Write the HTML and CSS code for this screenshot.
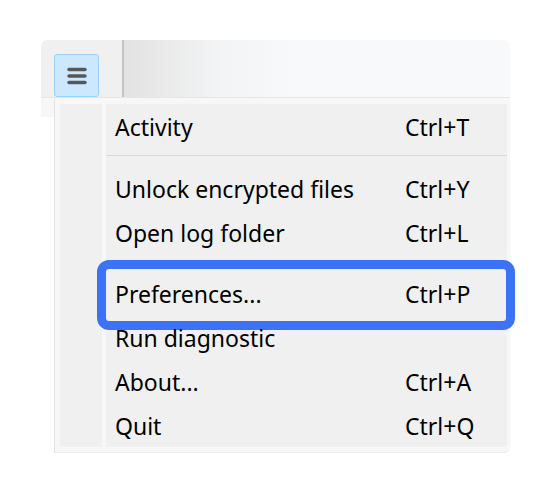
FILE: index.html
```html
<!DOCTYPE html>
<html>
<head>
<meta charset="utf-8">
<link rel="stylesheet" href="styles.css">
</head>
<body>
<div class="window">
  <div class="toolbar">
    <div class="tool-left">
      <div class="menu-btn">
        <svg width="20" height="18" viewBox="0 0 20 18"><g stroke="#575757" stroke-width="3.4" stroke-linecap="round"><line x1="2" y1="2.5" x2="18" y2="2.5"/><line x1="2" y1="9" x2="18" y2="9"/><line x1="2" y1="15.5" x2="18" y2="15.5"/></g></svg>
      </div>
    </div>
    <div class="divider"></div>
    <div class="tool-right"></div>
  </div>
  <div class="body">
    <div class="strip"></div>
    <div class="menu">
      <div class="gutter"></div>
      <div class="items">
        <div class="item"><span class="label">Activity</span><span class="key">Ctrl+T</span></div>
        <div class="sep"></div>
        <div class="item"><span class="label">Unlock encrypted files</span><span class="key">Ctrl+Y</span></div>
        <div class="item"><span class="label">Open log folder</span><span class="key">Ctrl+L</span></div>
        <div class="sep"></div>
        <div class="item highlighted"><span class="label">Preferences...</span><span class="key">Ctrl+P</span><div class="focus-box"></div></div>
        <div class="item"><span class="label">Run diagnostic</span><span class="key"></span></div>
        <div class="item"><span class="label">About...</span><span class="key">Ctrl+A</span></div>
        <div class="item"><span class="label">Quit</span><span class="key">Ctrl+Q</span></div>
      </div>
    </div>
  </div>
</div>
</body>
</html>
```
FILE: styles.css
```css
html, body {
  margin: 0;
  padding: 0;
  background: #ffffff;
}
body {
  font-family: "Noto Sans", "Open Sans", sans-serif;
  color: #000;
}
.window {
  margin: 40px 0 0 41px;
  width: 469px;
  border-radius: 7px 7px 0 0;
}
.toolbar {
  display: flex;
  height: 57px;
  border-bottom: 1px solid #e6e6e6;
  border-radius: 7px 7px 0 0;
  overflow: hidden;
}
.tool-left {
  width: 81px;
  background: #f0f0f0;
  padding: 14px 0 0 13px;
  box-sizing: border-box;
}
.menu-btn {
  width: 45px;
  height: 43px;
  box-sizing: border-box;
  background: #cce8ff;
  border: 1px solid #99d1ff;
  border-radius: 3px;
  display: flex;
  align-items: center;
  justify-content: center;
}
.menu-btn svg {
  display: block;
}
.divider {
  width: 2px;
  background: #c4c4c4;
}
.tool-right {
  flex: 1;
  background: linear-gradient(to right, #e2e2e2 0%, #f3f4f5 25%, #f8f9fa 45%, #f8f9fa 100%);
}
.body {
  display: flex;
}
.strip {
  width: 13px;
  height: 19px;
  background: #f7f7f7;
}
.menu {
  flex: 1;
  display: flex;
  background: #f7f7f7;
  border-left: 1px solid #e2e2e2;
  border-bottom: 1px solid #ececec;
  border-radius: 0 0 6px 0;
  padding: 6px 3px 5px 5px;
  gap: 4px;
}
.gutter {
  width: 42px;
  background: #f0f0f0;
}
.items {
  flex: 1;
  background: #f0f0f0;
}
.item {
  position: relative;
  display: flex;
  height: 44px;
  line-height: 44px;
  padding: 1px 0 0 9px;
  box-sizing: border-box;
  font-size: 23px;
  white-space: nowrap;
}
.label {
  width: 290px;
}
.key {
  flex: 1;
}
.sep {
  height: 1px;
  background: #d9d9d9;
  margin: 6.5px 0 10px 0;
}
.focus-box {
  position: absolute;
  top: -11px;
  left: -9px;
  right: -8px;
  bottom: -15px;
  border: 9px solid #3b72f6;
  border-radius: 12px;
  pointer-events: none;
}
```
